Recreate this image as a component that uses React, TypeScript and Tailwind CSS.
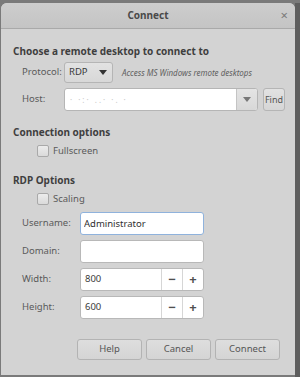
import { useState } from 'react';

function Checkbox({ label }: { label: string }) {
  return (
    <label className="flex items-center h-[14px] ml-[24px] gap-[4px]">
      <span className="w-[12px] h-[12px] rounded-[2px] border border-[#a9a9a9] bg-gradient-to-b from-[#ececec] to-[#dadada]" />
      <span className="text-[9.5px] leading-[14px] text-[#5a5a5a]">{label}</span>
    </label>
  );
}

function Spin({ value }: { value: string }) {
  return (
    <div className="flex w-[124px] h-[23px] rounded-[3px] border border-[#b8b8b8] bg-white overflow-hidden">
      <span className="flex-1 flex items-center pl-[4px] text-[9.5px] text-[#3a3a3a]">{value}</span>
      <span className="w-[21px] flex items-center justify-center border-l border-[#d6d6d6] text-[13px] font-bold text-[#505050]">−</span>
      <span className="w-[21px] flex items-center justify-center border-l border-[#d6d6d6] text-[13px] font-bold text-[#505050]">+</span>
    </div>
  );
}

function Row({ label, children, className = '' }: { label: string; children: React.ReactNode; className?: string }) {
  return (
    <div className={`flex items-center ${className}`}>
      <span className="w-[58px] shrink-0 ml-[9px] text-[9.5px] text-[#5a5a5a]">{label}</span>
      {children}
    </div>
  );
}

export default function App() {
  const [username, setUsername] = useState('Administrator');

  return (
    <div
      className="w-[300px] h-[377px] bg-[#7a7a7a] flex pt-[3px] overflow-hidden"
      style={{ fontFamily: '"Noto Sans", "DejaVu Sans", sans-serif' }}
    >
      <div className="ml-[1px] w-[294px] h-[372px] rounded-t-[6px] bg-[#d3d3d3] flex flex-col overflow-hidden">
        <div className="h-[26px] shrink-0 relative flex items-center justify-center bg-gradient-to-b from-[#cdcdcd] to-[#c4c4c4] border-b border-[#a9a9a9]">
          <span className="text-[10px] font-bold text-[#4a4a4a]">Connect</span>
          <span className="absolute right-[7px] top-[5px] text-[13px] leading-[14px] text-[#7a7a7a]">×</span>
        </div>

        <div className="pl-[12px] flex flex-col">
          <h2 className="mt-[15px] text-[10px] leading-[14px] font-bold text-[#3f3f3f]">
            Choose a remote desktop to connect to
          </h2>

          <div className="mt-[4px] flex items-center h-[21px]">
            <span className="w-[42px] shrink-0 ml-[9px] text-[9.5px] text-[#5a5a5a]">Protocol:</span>
            <div className="w-[49px] h-[21px] rounded-[3px] border border-[#b5b5b5] bg-gradient-to-b from-[#e2e2e2] to-[#d8d8d8] flex items-center justify-between pl-[4px] pr-[5px]">
              <span className="text-[9.5px] text-[#3a3a3a]">RDP</span>
              <svg width="8" height="5" viewBox="0 0 8 5">
                <path d="M0 0h8L4 5z" fill="#333" />
              </svg>
            </div>
            <span className="ml-[9px] text-[8px] italic text-[#5f5f5f]">Access MS Windows remote desktops</span>
          </div>

          <div className="mt-[5px] flex items-center h-[23px]">
            <span className="w-[42px] shrink-0 ml-[9px] text-[9.5px] text-[#5a5a5a]">Host:</span>
            <div className="w-[194px] h-[23px] rounded-[3px] border border-[#b5b5b5] bg-white flex overflow-hidden">
              <span className="flex-1 flex items-center pl-[5px] text-[8px] tracking-[2px] text-[#c8c8c8]">· ·:· ..· ·. ·</span>
              <span className="w-[21px] flex items-center justify-center border-l border-[#c4c4c4] bg-gradient-to-b from-[#e4e4e4] to-[#d8d8d8]">
                <svg width="8" height="5" viewBox="0 0 8 5">
                  <path d="M0 0h8L4 5z" fill="#777" />
                </svg>
              </span>
            </div>
            <button className="ml-[5px] w-[22px] h-[23px] rounded-[3px] border border-[#b5b5b5] bg-gradient-to-b from-[#e2e2e2] to-[#d6d6d6] text-[9px] text-[#555] flex items-center justify-center">
              Find
            </button>
          </div>

          <h2 className="mt-[14px] text-[10px] leading-[14px] font-bold text-[#3f3f3f]">Connection options</h2>
          <div className="mt-[5px]">
            <Checkbox label="Fullscreen" />
          </div>

          <h2 className="mt-[15px] text-[10px] leading-[14px] font-bold text-[#3f3f3f]">RDP Options</h2>
          <div className="mt-[5px]">
            <Checkbox label="Scaling" />
          </div>

          <Row label="Username:" className="mt-[6px]">
            <input
              value={username}
              onChange={(e) => setUsername(e.target.value)}
              className="w-[124px] h-[23px] rounded-[3px] border border-[#8fb2dc] bg-white px-[3px] text-[9.5px] text-[#2f2f2f] outline-none"
            />
          </Row>
          <Row label="Domain:" className="mt-[5px]">
            <div className="w-[124px] h-[23px] rounded-[3px] border border-[#b8b8b8] bg-white" />
          </Row>
          <Row label="Width:" className="mt-[5px]">
            <Spin value="800" />
          </Row>
          <Row label="Height:" className="mt-[5px]">
            <Spin value="600" />
          </Row>

          <div className="mt-[20px] ml-[64px] flex gap-[4px]">
            {['Help', 'Cancel', 'Connect'].map((b) => (
              <button
                key={b}
                className="w-[65px] h-[21px] rounded-[3px] border border-[#b3b3b3] bg-gradient-to-b from-[#dedede] to-[#d4d4d4] text-[9.5px] text-[#555] flex items-center justify-center"
              >
                {b}
              </button>
            ))}
          </div>
        </div>
      </div>
      <div className="flex-1 bg-[#5e5e5e]" />
    </div>
  );
}
